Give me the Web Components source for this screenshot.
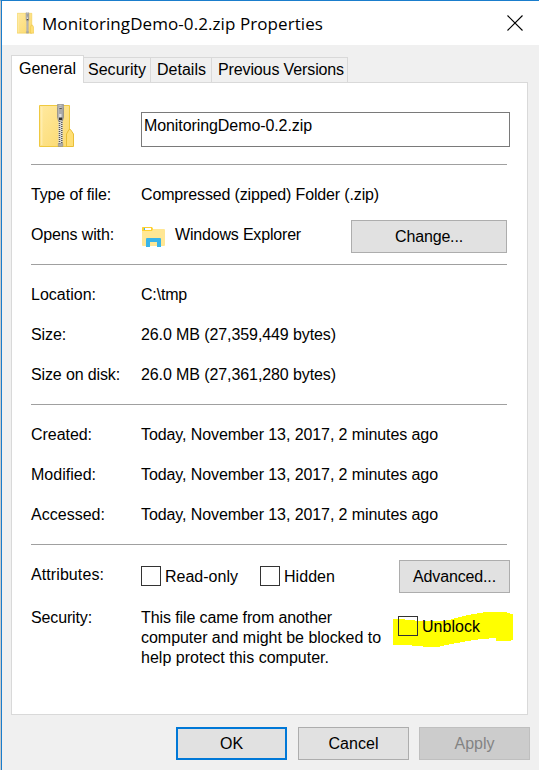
<!DOCTYPE html>
<html lang="en"><head><meta charset="utf-8"><title>MonitoringDemo-0.2.zip Properties</title>
<style>
body{margin:0;width:539px;height:770px;overflow:hidden;font:16px/20px "Liberation Sans",Arial,sans-serif;color:#000}
</style></head><body>
<properties-window></properties-window>
<script>
function define(name, html, ready) {
  const t = document.createElement('template');
  t.innerHTML = html;
  customElements.define(name, class extends HTMLElement {
    connectedCallback() {
      if (this.shadowRoot) return;
      this.attachShadow({mode: 'open'}).append(t.content.cloneNode(true));
      if (ready) ready(this, this.shadowRoot);
    }
  });
}

/* Text run with tracking spread so that it fills the width in "w". */
define('fit-text', `<style>:host{display:inline-block;white-space:nowrap}</style><span><slot></slot></span>`, (el, root) => {
  const w = parseFloat(el.getAttribute('w'));
  const natural = root.querySelector('span').getBoundingClientRect().width;
  el.style.letterSpacing = ((w - natural) / el.textContent.length) + 'px';
});

define('zip-icon', `<style>:host{display:block;flex:none}svg{display:block;width:100%;height:100%}</style>
<svg viewBox="0 0 35 43">
<defs><linearGradient id="f" x2="1" y2="1"><stop stop-color="#ffe9a0"/><stop offset="1" stop-color="#fbd96d"/></linearGradient>
<linearGradient id="m"><stop stop-color="#999"/><stop offset=".45" stop-color="#e8e8e8"/><stop offset="1" stop-color="#888"/></linearGradient></defs>
<path d="M.5 1.5h30v41H.5z" fill="url(#f)" stroke="#efc941"/><path d="M2.8 3v38" stroke="#fff0b8"/>
<path d="M27.5 42.5V30l2.5-4.5h1.5L34.5 30v12.5z" fill="#ffdf75" stroke="#e9bf38"/>
<path d="M19.5 17h4v23h-4z" fill="#ddd"/>
<path d="M20.5 17v23M22.8 18v22" stroke="#555" stroke-width="1.5" stroke-dasharray="1 1"/>
<path d="M18.5.5h6v12.500l-1 4h-4l-1-4z" fill="url(#m)" stroke="#888" stroke-width=".7"/>
<path d="M18.300 1.500h6.500v2h-6.500zM20 5h3v5h-3z" fill="#aaa"/><path d="M20.300 4.500h2.500" stroke="#555"/>
<path d="M20 13.500h3.200v2.500H20z" fill="#333"/><path d="M19.300 39.500h4.500v3h-4.500z" fill="#aaa" stroke="#888" stroke-width=".5"/></svg>`);

define('explorer-icon', `<style>:host{display:block;flex:none;width:23px;height:20px}svg{display:block}</style>
<svg width="23" height="20" viewBox="0 0 23 20"><path d="M0 1q0-1 1-1h9l1 2h11q1 0 1 1v15q0 1-1 1H1q-1 0-1-1z" fill="#ffe794"/>
<path d="M0 1q0-1 1-1h9l1 2-1 2H0z" fill="#ffd02f"/><path d="M3 1h6v2H3z" fill="#fff"/><path d="M2 1h1v2H2z" fill="#39b4e8"/>
<path d="M4 20v-8q0-1 1-1h13q1 0 1 1v8h-4v-5H8v5z" fill="#39b4e8"/></svg>`);

define('title-bar', `<style>
:host{display:flex;align-items:center;height:44px;background:#fff;padding:0 16px 0 15px;font:17px/24px "Open Sans","Noto Sans",sans-serif}
zip-icon{width:17px;height:22px;margin:-1px 8px 0 0}.t{flex:1;padding-top:2px}svg{display:block}
</style><zip-icon></zip-icon><div class="t"><slot></slot></div>
<svg width="16" height="16" viewBox="0 0 16 16"><path d="M.5.5l15 15M15.500.5l-15 15" stroke="#000" stroke-width="1.100" fill="none"/></svg>`);

define('tab-item', `<style>
:host{display:block;box-sizing:border-box;height:25px;border:1px solid #d9d9d9;border-width:1px 1px 0 0;padding:2px 0 0 4px;background:#f0f0f0}
:host([active]){height:28px;background:#fff;border-left-width:1px;padding:3px 0 0 7px;margin-bottom:-1px;position:relative}
</style><slot></slot>`);

define('push-button', `<style>
:host{display:flex;flex:none;box-sizing:border-box;width:111px;height:33px;align-items:center;justify-content:center;background:#e1e1e1;border:1px solid #adadad}
:host([default]){border:2px solid #0078d7}
:host([disabled]){background:#ccc;border-color:#bfbfbf;color:#838383}
</style><slot></slot>`);

define('check-box', `<style>:host{display:flex;align-items:center;gap:4px}
i{box-sizing:border-box;width:20px;height:20px;border:1px solid #333;background:var(--box,#fff)}span{padding-top:1px;margin-bottom:-1px;height:20px}</style><i></i><span><slot></slot></span>`);

define('rule-line', `<style>:host{display:block;height:1px;background:#a0a0a0;width:476px}</style>`);

define('property-row', `<style>
:host{display:grid;grid-template-columns:110px 1fr;height:40px;align-items:center}
.v{display:flex;align-items:center}
</style><slot name="label"></slot><div class="v"><slot></slot></div>`);

define('name-field', `<style>:host{display:block;box-sizing:border-box;width:369px;height:35px;border:1px solid #7a7a7a;background:#fff;padding:3px 2px}</style><slot></slot>`);

define('marker-highlight', `<style>:host{display:block;position:relative;width:120px;height:36px}
svg{position:absolute;inset:0}div{position:relative;padding:4px 0 0 5px;--box:transparent}</style>
<svg width="120" height="36" viewBox="0 0 120 36"><path fill="#ff0" d="M0 7h12v1h10v1h31v-1h5v-1h3v-1h4v-1h4v-1h4V3h5V2h6V1h6V0h24v1h3v1h3v26h-2v1h-15v-3h-7v1h-11v1h-7v1h-6v1h-5v1h-6v1h-5v1h-5v1h-4v1H30v-1H19v-1H0z"/></svg><div><slot></slot></div>`);

define('properties-window', `<style>
:host{display:flex;flex-direction:column;box-sizing:border-box;width:539px;height:770px;background:#f0f0f0;border-top:1px solid #1a7dcc;border-left:1px solid #c9c9c9;box-shadow:inset 1px 0 #1a7dcc}
title-bar{margin-left:1px}
.tabs{display:flex;align-items:flex-end;height:37px;padding-left:10px}
.panel{box-sizing:border-box;width:517px;height:633px;margin-left:10px;border:1px solid #d9d9d9;background:#fff;padding-left:19px}
.head{display:flex;height:81px;align-items:flex-start;padding-left:7.500px}
.head zip-icon{width:35px;height:43px;margin:21px 67.500px 0 0}
.head name-field{margin-top:29px}
.group{padding:10px 0 9px}
.open{display:flex;align-items:center;width:366px;gap:10px}
.open push-button{width:156px;margin-left:auto;margin-top:3px}
.attr{display:flex;align-items:center;width:369px;padding-top:2px}
.attr check-box+check-box{margin-left:22px}.attr push-button{margin-left:auto}
.attr push-button fit-text{margin-top:1px}
.security{display:grid;grid-template-columns:110px 252px 120px;padding-top:13px;align-items:start}
.security marker-highlight{margin-top:4px}
.security .note{display:flex;flex-direction:column}
.actions{display:flex;justify-content:flex-end;gap:10px;padding:12px 9px 0 0}
.actions push-button:nth-child(2){margin-left:1px}
</style>
<title-bar><fit-text w="281">MonitoringDemo-0.2.zip Properties</fit-text></title-bar>
<div class="tabs"><tab-item active style="width:73px"><fit-text w="57">General</fit-text></tab-item><tab-item style="width:67px"><fit-text w="58">Security</fit-text></tab-item><tab-item style="width:61px;padding-left:6px"><fit-text w="49">Details</fit-text></tab-item><tab-item style="width:136px;padding-left:6px"><fit-text w="126">Previous Versions</fit-text></tab-item></div>
<div class="panel">
<div class="head"><zip-icon></zip-icon><name-field><fit-text w="168">MonitoringDemo-0.2.zip</fit-text></name-field></div>
<rule-line></rule-line>
<div class="group">
<property-row><fit-text slot="label" w="80">Type of file:</fit-text><fit-text w="238">Compressed (zipped) Folder (.zip)</fit-text></property-row>
<property-row><fit-text slot="label" w="83">Opens with:</fit-text><div class="open"><explorer-icon style="margin:4px 0 0 1px"></explorer-icon><fit-text w="126">Windows Explorer</fit-text><push-button><fit-text w="68">Change...</fit-text></push-button></div></property-row>
</div>
<rule-line></rule-line>
<div class="group">
<property-row><fit-text slot="label" w="65">Location:</fit-text><fit-text w="46">C:\\tmp</fit-text></property-row>
<property-row><fit-text slot="label" w="35">Size:</fit-text><fit-text w="195">26.0 MB (27,359,449 bytes)</fit-text></property-row>
<property-row><fit-text slot="label" w="89">Size on disk:</fit-text><fit-text w="195">26.0 MB (27,361,280 bytes)</fit-text></property-row>
</div>
<rule-line></rule-line>
<div class="group">
<property-row><fit-text slot="label" w="61">Created:</fit-text><fit-text w="297">Today, November 13, 2017, 2 minutes ago</fit-text></property-row>
<property-row><fit-text slot="label" w="65">Modified:</fit-text><fit-text w="297">Today, November 13, 2017, 2 minutes ago</fit-text></property-row>
<property-row><fit-text slot="label" w="74">Accessed:</fit-text><fit-text w="297">Today, November 13, 2017, 2 minutes ago</fit-text></property-row>
</div>
<rule-line></rule-line>
<div style="padding-top:10px">
<property-row><fit-text slot="label" w="73">Attributes:</fit-text><div class="attr"><check-box><fit-text w="73">Read-only</fit-text></check-box><check-box><fit-text w="51">Hidden</fit-text></check-box><push-button><fit-text w="83">Advanced...</fit-text></push-button></div></property-row>
<div class="security"><fit-text w="61">Security:</fit-text><div class="note"><fit-text w="191">This file came from another</fit-text><fit-text w="240">computer and might be blocked to</fit-text><fit-text w="188">help protect this computer.</fit-text></div>
<marker-highlight><check-box><fit-text w="58">Unblock</fit-text></check-box></marker-highlight></div>
</div>
</div>
<div class="actions"><push-button default><fit-text w="23">OK</fit-text></push-button><push-button><fit-text w="50">Cancel</fit-text></push-button><push-button disabled><fit-text w="40">Apply</fit-text></push-button></div>`);
</script></body></html>
